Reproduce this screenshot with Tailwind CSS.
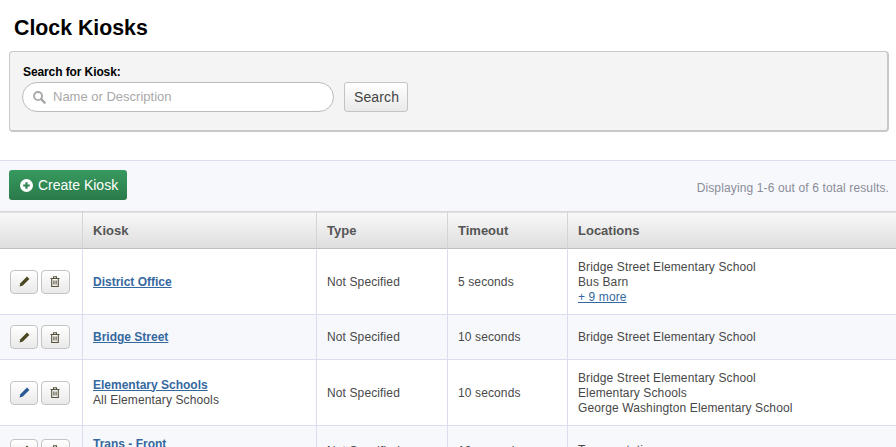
<!DOCTYPE html>
<html lang="en">
  <head>
    <meta charset="UTF-8" />
    <title>Clock Kiosks</title>
    <script src="https://cdn.jsdelivr.net/npm/@tailwindcss/browser@4"></script>
  </head>
  <body class="bg-white h-[447px] overflow-hidden font-['Liberation_Sans',Arial,sans-serif] text-[12px] tracking-[0.12px] text-[#484848]">
    <h1 class="h-[51px] pl-[14px] pt-[15px] text-[21.3px] leading-[26px] font-bold tracking-normal text-black">Clock Kiosks</h1>

    <!-- Search panel -->
    <div class="mx-[9px] h-[81px] w-[880px] rounded-[4px] border border-[#c8c8c8] border-b-2 border-r-2 bg-[#f4f4f4] pl-[12px] pt-[12px]">
      <label class="block h-[18px] pl-px text-[12px] leading-[16px] font-bold tracking-[-0.1px] text-black">Search for Kiosk:</label>
      <div class="flex gap-[10px]">
        <div class="flex h-[30px] w-[312px] items-center rounded-full border border-[#bbb] bg-white pl-[9px]">
          <svg class="h-[14px] w-[14px]" viewBox="0 0 15 15" fill="none" stroke="#a8a8a8"><circle cx="6.5" cy="6.5" r="4.3" stroke-width="2"/><path d="M9.8 9.8L13.5 13.5" stroke-width="2.6" stroke-linecap="round"/></svg>
          <span class="ml-[7px] text-[13px] tracking-normal text-[#a9a9a9]">Name or Description</span>
        </div>
        <button class="h-[30px] w-[64px] rounded-[3px] border border-[#c4c4c4] bg-gradient-to-b from-white to-[#e9e9e9] pl-px text-[14px] text-[#444]">Search</button>
      </div>
    </div>

    <!-- Toolbar -->
    <div class="mt-[28px] flex h-[51px] items-start justify-between border-t border-[#dcdcf0] bg-[#f7f8fb] pl-[9px] pr-[7px] pt-[9px]">
      <button class="flex h-[30px] w-[118px] items-center rounded-[3px] bg-gradient-to-b from-[#379a5f] to-[#2a7a49] pl-[11px] text-[14px] tracking-normal text-white">
        <svg class="mr-[5px] h-[13px] w-[13px]" viewBox="0 0 13 13"><circle cx="6.5" cy="6.5" r="6.5" fill="#fff"/><path d="M6.5 3.2v6.6M3.2 6.5h6.6" stroke="#2f8553" stroke-width="2.2"/></svg>
        Create Kiosk
      </button>
      <span class="pt-[9px] text-[12px] tracking-[0.13px] text-[#8a8d99]">Displaying 1-6 out of 6 total results.</span>
    </div>

    <!-- Kiosk table -->
    <table class="w-[896px] table-fixed border-collapse">
      <colgroup>
        <col class="w-[82px]" /><col class="w-[234px]" /><col class="w-[131px]" /><col class="w-[120px]" /><col class="w-[329px]" />
      </colgroup>
      <thead>
        <tr class="h-[37px] border-y border-t-[#d8d8d8] border-b-[#bdbdbd] bg-gradient-to-b from-[#f8f8f8] to-[#dedede] text-left text-[13px] font-bold tracking-normal text-[#555]">
          <th class="border-r border-[#d4d4d4]"></th>
          <th class="border-r border-[#d4d4d4] pl-[10.5px] pt-[2px] font-bold">Kiosk</th>
          <th class="border-r border-[#d4d4d4] pl-[10.5px] pt-[2px] font-bold">Type</th>
          <th class="border-r border-[#d4d4d4] pl-[10.5px] pt-[2px] font-bold">Timeout</th>
          <th class="pl-[10.5px] pt-[2px] font-bold">Locations</th>
        </tr>
      </thead>
      <tbody>
        <tr class="h-[66px] border-b border-[#dcdcf0]">
          <td class="border-r border-[#dcdcf0] pl-[10px]">
            <div class="flex gap-[3px]">
              <button class="flex h-[24px] w-[28px] items-center justify-center rounded-[4px] border border-[#c4c4c4] bg-gradient-to-b from-white to-[#e9e9e9]"><svg class="h-[11px] w-[11px]" viewBox="0 0 11 11"><path d="M8 .6l2.4 2.4-6.6 6.6-3.2.8.8-3.2z" fill="#4a4820"/></svg></button>
              <button class="flex h-[24px] w-[29px] items-center justify-center rounded-[4px] border border-[#c4c4c4] bg-gradient-to-b from-white to-[#e9e9e9] pr-[2px]"><svg class="h-[11px] w-[10px]" viewBox="0 0 10 11" fill="none" stroke="#55503a" stroke-width="1.1"><path d="M.5 2.5h9M3.5 2.5V.8h3v1.7M1.7 2.5v8h6.6v-8M3.9 4.5v4M6.1 4.5v4"/></svg></button>
            </div>
          </td>
          <td class="border-r border-[#dcdcf0] pl-[10.5px]"><a href="#" class="font-bold tracking-normal text-[#35689f] underline">District Office</a></td>
          <td class="border-r border-[#dcdcf0] pl-[10.5px]">Not Specified</td>
          <td class="border-r border-[#dcdcf0] pl-[10.5px]">5 seconds</td>
          <td class="pl-[10.5px] pt-[2px] leading-[15px]">Bridge Street Elementary School<br />Bus Barn<br /><a href="#" class="text-[#35689f] underline">+ 9 more</a></td>
        </tr>
        <tr class="h-[45px] border-b border-[#dcdcf0] bg-[#f7f8fb]">
          <td class="border-r border-[#dcdcf0] pl-[10px]">
            <div class="flex gap-[3px]">
              <button class="flex h-[24px] w-[28px] items-center justify-center rounded-[4px] border border-[#c4c4c4] bg-gradient-to-b from-white to-[#e9e9e9]"><svg class="h-[11px] w-[11px]" viewBox="0 0 11 11"><path d="M8 .6l2.4 2.4-6.6 6.6-3.2.8.8-3.2z" fill="#4a4820"/></svg></button>
              <button class="flex h-[24px] w-[29px] items-center justify-center rounded-[4px] border border-[#c4c4c4] bg-gradient-to-b from-white to-[#e9e9e9] pr-[2px]"><svg class="h-[11px] w-[10px]" viewBox="0 0 10 11" fill="none" stroke="#55503a" stroke-width="1.1"><path d="M.5 2.5h9M3.5 2.5V.8h3v1.7M1.7 2.5v8h6.6v-8M3.9 4.5v4M6.1 4.5v4"/></svg></button>
            </div>
          </td>
          <td class="border-r border-[#dcdcf0] pl-[10.5px]"><a href="#" class="font-bold tracking-normal text-[#35689f] underline">Bridge Street</a></td>
          <td class="border-r border-[#dcdcf0] pl-[10.5px]">Not Specified</td>
          <td class="border-r border-[#dcdcf0] pl-[10.5px]">10 seconds</td>
          <td class="pl-[10.5px] leading-[15px]">Bridge Street Elementary School</td>
        </tr>
        <tr class="h-[66px] border-b border-[#dcdcf0]">
          <td class="border-r border-[#dcdcf0] pl-[10px]">
            <div class="flex gap-[3px]">
              <button class="flex h-[24px] w-[28px] items-center justify-center rounded-[4px] border border-[#c4c4c4] bg-gradient-to-b from-white to-[#e9e9e9]"><svg class="h-[11px] w-[11px]" viewBox="0 0 11 11"><path d="M8 .6l2.4 2.4-6.6 6.6-3.2.8.8-3.2z" fill="#2a5a94"/></svg></button>
              <button class="flex h-[24px] w-[29px] items-center justify-center rounded-[4px] border border-[#c4c4c4] bg-gradient-to-b from-white to-[#e9e9e9] pr-[2px]"><svg class="h-[11px] w-[10px]" viewBox="0 0 10 11" fill="none" stroke="#55503a" stroke-width="1.1"><path d="M.5 2.5h9M3.5 2.5V.8h3v1.7M1.7 2.5v8h6.6v-8M3.9 4.5v4M6.1 4.5v4"/></svg></button>
            </div>
          </td>
          <td class="border-r border-[#dcdcf0] pl-[10.5px] leading-[15px]"><a href="#" class="font-bold tracking-normal text-[#35689f] underline">Elementary Schools</a><br />All Elementary Schools</td>
          <td class="border-r border-[#dcdcf0] pl-[10.5px]">Not Specified</td>
          <td class="border-r border-[#dcdcf0] pl-[10.5px]">10 seconds</td>
          <td class="pl-[10.5px] pt-[2px] leading-[15px]">Bridge Street Elementary School<br />Elementary Schools<br />George Washington Elementary School</td>
        </tr>
        <tr class="h-[50px] bg-[#f7f8fb]">
          <td class="border-r border-[#dcdcf0] pl-[10px]">
            <div class="flex gap-[3px]">
              <button class="flex h-[24px] w-[28px] items-center justify-center rounded-[4px] border border-[#c4c4c4] bg-gradient-to-b from-white to-[#e9e9e9]"><svg class="h-[11px] w-[11px]" viewBox="0 0 11 11"><path d="M8 .6l2.4 2.4-6.6 6.6-3.2.8.8-3.2z" fill="#4a4820"/></svg></button>
              <button class="flex h-[24px] w-[29px] items-center justify-center rounded-[4px] border border-[#c4c4c4] bg-gradient-to-b from-white to-[#e9e9e9] pr-[2px]"><svg class="h-[11px] w-[10px]" viewBox="0 0 10 11" fill="none" stroke="#55503a" stroke-width="1.1"><path d="M.5 2.5h9M3.5 2.5V.8h3v1.7M1.7 2.5v8h6.6v-8M3.9 4.5v4M6.1 4.5v4"/></svg></button>
            </div>
          </td>
          <td class="border-r border-[#dcdcf0] pl-[10.5px] pt-[2px] leading-[15px]"><a href="#" class="font-bold tracking-normal text-[#35689f] underline">Trans - Front</a><br />Front Entrance</td>
          <td class="border-r border-[#dcdcf0] pl-[10.5px]">Not Specified</td>
          <td class="border-r border-[#dcdcf0] pl-[10.5px]">10 seconds</td>
          <td class="pl-[10.5px] leading-[15px]">Transportation</td>
        </tr>
      </tbody>
    </table>
  </body>
</html>
